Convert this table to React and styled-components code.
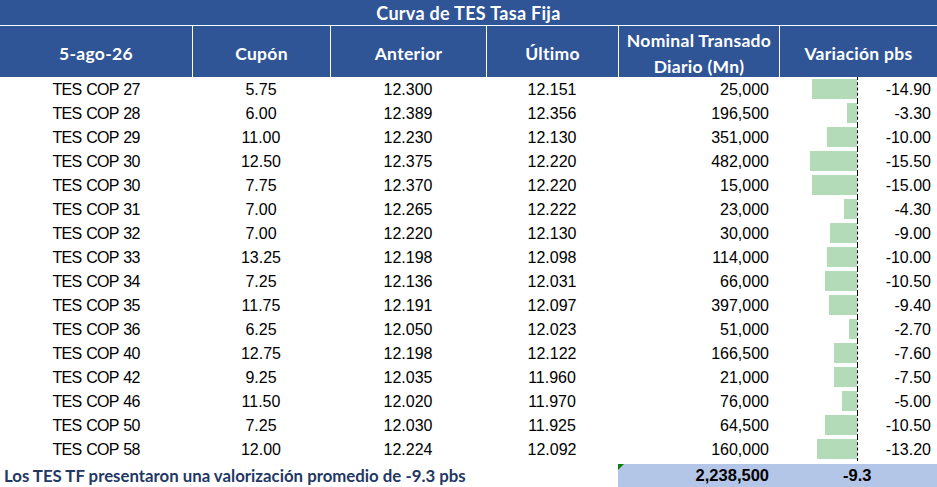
import React from "react";
import styled, { createGlobalStyle } from "styled-components";

const rows = [
    ["TES COP 27", "5.75", "12.300", "12.151", "25,000", -14.9],
    ["TES COP 28", "6.00", "12.389", "12.356", "196,500", -3.3],
    ["TES COP 29", "11.00", "12.230", "12.130", "351,000", -10.0],
    ["TES COP 30", "12.50", "12.375", "12.220", "482,000", -15.5],
    ["TES COP 30", "7.75", "12.370", "12.220", "15,000", -15.0],
    ["TES COP 31", "7.00", "12.265", "12.222", "23,000", -4.3],
    ["TES COP 32", "7.00", "12.220", "12.130", "30,000", -9.0],
    ["TES COP 33", "13.25", "12.198", "12.098", "114,000", -10.0],
    ["TES COP 34", "7.25", "12.136", "12.031", "66,000", -10.5],
    ["TES COP 35", "11.75", "12.191", "12.097", "397,000", -9.4],
    ["TES COP 36", "6.25", "12.050", "12.023", "51,000", -2.7],
    ["TES COP 40", "12.75", "12.198", "12.122", "166,500", -7.6],
    ["TES COP 42", "9.25", "12.035", "11.960", "21,000", -7.5],
    ["TES COP 46", "11.50", "12.020", "11.970", "76,000", -5.0],
    ["TES COP 50", "7.25", "12.030", "11.925", "64,500", -10.5],
    ["TES COP 58", "12.00", "12.224", "12.092", "160,000", -13.2],
];

const COLS = "192px 138px 156px 132px 161px 158px";
const PX_PER_PB = 3.03;

const GlobalStyle = createGlobalStyle`
    body {
        margin: 0;
        background: #fff;
    }
`;

const Sheet = styled.div`
    width: 937px;
    height: 487px;
    overflow: hidden;
    background: #fff;
    font-family: "Liberation Sans", Arial, sans-serif;
`;

const Title = styled.div`
    height: 25px;
    background: #2f5597;
    border-bottom: 1px solid #fff;
    color: #fff;
    font-family: Lato, "Liberation Sans", sans-serif;
    font-weight: 700;
    font-size: 18px;
    letter-spacing: 0.3px;
    display: flex;
    align-items: center;
    justify-content: center;
`;

const HeadRow = styled.div`
    display: grid;
    grid-template-columns: ${COLS};
    height: 51px;
    background: #2f5597;
`;

const HeadCell = styled.div`
    display: flex;
    align-items: center;
    justify-content: center;
    text-align: center;
    padding-top: 2px;
    color: #fff;
    font-family: Lato, "Liberation Sans", sans-serif;
    font-weight: 700;
    font-size: 17.5px;
    letter-spacing: 0.3px;
    line-height: 26px;
    border-left: ${(p) => (p.first ? "none" : "1px solid #fff")};
`;

const Body = styled.div`
    display: grid;
    grid-template-columns: ${COLS};
    grid-auto-rows: 24px;
`;

const Cell = styled.div`
    display: flex;
    align-items: center;
    justify-content: ${(p) => (p.right ? "flex-end" : "center")};
    padding-top: 1px;
    padding-right: ${(p) => (p.right ? "10px" : "0")};
    font-size: 16px;
    color: #000;
    letter-spacing: ${(p) => (p.tight ? "-0.7px" : "0")};
    word-spacing: ${(p) => (p.tight ? "1px" : "0")};
`;

const VarCell = styled.div`
    position: relative;
    display: flex;
    align-items: center;
    justify-content: flex-end;
    padding-top: 1px;
    padding-right: 6px;
    font-size: 16px;
`;

const Bar = styled.div`
    position: absolute;
    top: 2px;
    bottom: 2px;
    right: 80px;
    background: #b3dbb7;
`;

const Axis = styled.div`
    position: absolute;
    top: 0;
    bottom: 0;
    right: 79px;
    border-left: 1px dashed #000;
`;

const Value = styled.span`
    position: relative;
`;

const FootRow = styled.div`
    display: grid;
    grid-template-columns: 618px 161px 158px;
    height: 26px;
`;

const Note = styled.div`
    display: flex;
    align-items: center;
    padding-left: 4px;
    padding-top: 2px;
    color: #1f3864;
    font-family: Lato, "Liberation Sans", sans-serif;
    font-weight: 700;
    font-size: 16.8px;
    white-space: nowrap;
`;

const Total = styled.div`
    position: relative;
    margin-top: 3px;
    background: #b4c6e7;
    display: flex;
    align-items: center;
    justify-content: ${(p) => (p.right ? "flex-end" : "flex-start")};
    padding-right: ${(p) => (p.right ? "10px" : "0")};
    padding-left: ${(p) => (p.right ? "0" : "64px")};
    font-size: 16.5px;
    font-weight: 700;
    color: #000;
`;

const Flag = styled.span`
    position: absolute;
    top: 0;
    left: 0;
    width: 0;
    height: 0;
    border-top: 6px solid #107c10;
    border-right: 6px solid transparent;
`;

const App = () => {
    const renderRow = (r, i) => (
        <React.Fragment key={i}>
            <Cell tight>{r[0]}</Cell>
            <Cell>{r[1]}</Cell>
            <Cell>{r[2]}</Cell>
            <Cell>{r[3]}</Cell>
            <Cell right>{r[4]}</Cell>
            <VarCell>
                <Bar style={{ width: Math.abs(r[5]) * PX_PER_PB }} />
                <Axis />
                <Value>{r[5].toFixed(2)}</Value>
            </VarCell>
        </React.Fragment>
    );

    return (
        <>
            <GlobalStyle />
            <Sheet>
                <Title>Curva de TES Tasa Fija</Title>
                <HeadRow>
                    <HeadCell first>5-ago-26</HeadCell>
                    <HeadCell>Cupón</HeadCell>
                    <HeadCell>Anterior</HeadCell>
                    <HeadCell>Último</HeadCell>
                    <HeadCell>
                        Nominal Transado
                        <br />
                        Diario (Mn)
                    </HeadCell>
                    <HeadCell>Variación pbs</HeadCell>
                </HeadRow>
                <Body>{rows.map(renderRow)}</Body>
                <FootRow>
                    <Note>Los TES TF presentaron una valorización promedio de -9.3 pbs</Note>
                    <Total right>
                        <Flag />
                        2,238,500
                    </Total>
                    <Total>-9.3</Total>
                </FootRow>
            </Sheet>
        </>
    );
};

export default App;
